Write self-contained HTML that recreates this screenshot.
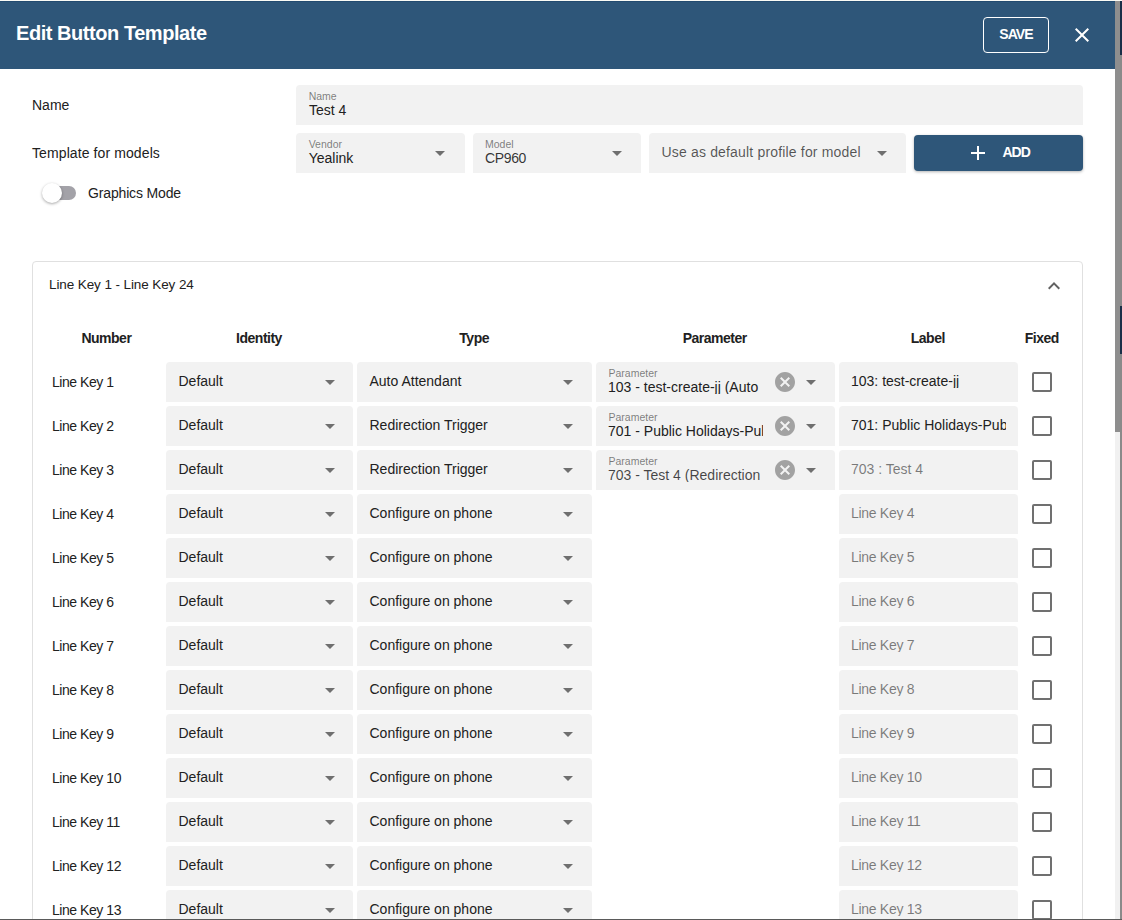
<!DOCTYPE html><html><head><meta charset="utf-8"><style>
html,body{margin:0;padding:0;width:1122px;height:920px;overflow:hidden;background:#fff;}
body{position:relative;font-family:"Liberation Sans",sans-serif;}
.t{position:absolute;white-space:nowrap;}
.b{position:absolute;}
</style></head><body>
<div class="b" style="left:0px;top:0px;width:1122px;height:1px;background:#fbfbf5;"></div>
<div class="b" style="left:0px;top:1px;width:1115px;height:68px;background:#2e5679;"></div>
<div class="b" style="left:0px;top:1px;width:1115px;height:1px;background:#234b70;"></div>
<div class="t" style="left:16px;top:23.07px;font-size:20px;line-height:20px;font-weight:700;color:#fff;letter-spacing:-0.45px;">Edit Button Template</div>
<div class="b" style="left:983px;top:17px;width:66px;height:36px;border:1px solid #fff;border-radius:4px;box-sizing:border-box;"></div>
<div class="t" style="left:716px;width:600px;text-align:center;top:26.85px;font-size:14px;line-height:14px;font-weight:700;color:#fff;letter-spacing:-0.9px;">SAVE</div>
<svg class="b" style="left:1070px;top:23px" width="24" height="24" viewBox="0 0 24 24"><path d="M19 6.41L17.59 5 12 10.59 6.41 5 5 6.41 10.59 12 5 17.59 6.41 19 12 13.41 17.59 19 19 17.59 13.41 12z" fill="#fff"/></svg>
<div class="t" style="left:32px;top:98.15px;font-size:14px;line-height:14px;font-weight:400;color:#212121;">Name</div>
<div class="t" style="left:32px;top:145.95px;font-size:14px;line-height:14px;font-weight:400;color:#212121;letter-spacing:0.1px;">Template for models</div>
<div class="b" style="left:296px;top:85px;width:787px;height:40px;background:#f2f2f2;border-radius:4px 4px 0 0;"></div>
<div class="t" style="left:308.7px;top:91.01px;font-size:10.5px;line-height:10.5px;font-weight:400;color:rgba(0,0,0,0.5);">Name</div>
<div class="t" style="left:309px;top:103.15px;font-size:14px;line-height:14px;font-weight:400;color:#212121;">Test 4</div>
<div class="b" style="left:296px;top:133px;width:169px;height:40px;background:#f2f2f2;border-radius:4px 4px 0 0;"></div>
<div class="t" style="left:308.7px;top:139.01px;font-size:10.5px;line-height:10.5px;font-weight:400;color:rgba(0,0,0,0.5);">Vendor</div>
<div class="t" style="left:308.7px;top:151.05px;font-size:14px;line-height:14px;font-weight:400;color:#212121;">Yealink</div>
<svg class="b" style="left:435.3px;top:151.3px" width="10" height="5" viewBox="0 0 10 5"><path d="M0 0L5 5L10 0Z" fill="rgba(0,0,0,0.54)"/></svg>
<div class="b" style="left:473px;top:133px;width:168px;height:40px;background:#f2f2f2;border-radius:4px 4px 0 0;"></div>
<div class="t" style="left:485px;top:139.01px;font-size:10.5px;line-height:10.5px;font-weight:400;color:rgba(0,0,0,0.5);">Model</div>
<div class="t" style="left:485px;top:151.05px;font-size:14px;line-height:14px;font-weight:400;color:rgba(0,0,0,0.8);letter-spacing:-0.35px;">CP960</div>
<svg class="b" style="left:611.8px;top:151.3px" width="10" height="5" viewBox="0 0 10 5"><path d="M0 0L5 5L10 0Z" fill="rgba(0,0,0,0.54)"/></svg>
<div class="b" style="left:649px;top:133px;width:257px;height:40px;background:#f2f2f2;border-radius:4px 4px 0 0;"></div>
<div class="t" style="left:661.5px;top:145.15px;font-size:14px;line-height:14px;font-weight:400;color:rgba(0,0,0,0.66);letter-spacing:0.17px;">Use as default profile for model</div>
<svg class="b" style="left:876.7px;top:151.3px" width="10" height="5" viewBox="0 0 10 5"><path d="M0 0L5 5L10 0Z" fill="rgba(0,0,0,0.54)"/></svg>
<div class="b" style="left:914px;top:135px;width:169px;height:36px;background:#2e5679;border-radius:4px;box-shadow:0 1px 3px rgba(0,0,0,0.3);"></div>
<svg class="b" style="left:966.3px;top:141px" width="24" height="24" viewBox="0 0 24 24"><path d="M19 13h-6v6h-2v-6H5v-2h6V5h2v6h6v2z" fill="#fff"/></svg>
<div class="t" style="left:1002.5px;top:145.35px;font-size:14px;line-height:14px;font-weight:700;color:#fff;letter-spacing:-1px;">ADD</div>
<div class="b" style="left:45px;top:186px;width:31px;height:14px;background:#a3a2a8;border-radius:7px;"></div>
<div class="b" style="left:42px;top:183px;width:20px;height:20px;background:#fff;border-radius:50%;box-shadow:0 1px 3px rgba(0,0,0,0.35);"></div>
<div class="t" style="left:88px;top:186.05px;font-size:14px;line-height:14px;font-weight:400;color:#212121;letter-spacing:-0.15px;">Graphics Mode</div>
<div class="b" style="left:32px;top:261px;width:1051px;height:699px;border:1px solid #e0e0e0;border-radius:4px;box-sizing:border-box;"></div>
<div class="t" style="left:49px;top:278.37px;font-size:13.5px;line-height:13.5px;font-weight:400;color:#212121;letter-spacing:-0.1px;">Line Key 1 - Line Key 24</div>
<svg class="b" style="left:1042px;top:274px" width="24" height="24" viewBox="0 0 24 24"><path d="M12 8l-6 6 1.41 1.41L12 10.83l4.59 4.58L18 14z" fill="rgba(0,0,0,0.62)"/></svg>
<div class="t" style="left:-193.6px;width:600px;text-align:center;top:330.95px;font-size:14px;line-height:14px;font-weight:700;color:#212121;letter-spacing:-0.5px;">Number</div>
<div class="t" style="left:-41.0px;width:600px;text-align:center;top:330.95px;font-size:14px;line-height:14px;font-weight:700;color:#212121;letter-spacing:-0.5px;">Identity</div>
<div class="t" style="left:174.2px;width:600px;text-align:center;top:330.95px;font-size:14px;line-height:14px;font-weight:700;color:#212121;letter-spacing:-0.5px;">Type</div>
<div class="t" style="left:414.69999999999993px;width:600px;text-align:center;top:330.95px;font-size:14px;line-height:14px;font-weight:700;color:#212121;letter-spacing:-0.5px;">Parameter</div>
<div class="t" style="left:627.8px;width:600px;text-align:center;top:330.95px;font-size:14px;line-height:14px;font-weight:700;color:#212121;letter-spacing:-0.5px;">Label</div>
<div class="t" style="left:741.8000000000002px;width:600px;text-align:center;top:330.95px;font-size:14px;line-height:14px;font-weight:700;color:#212121;letter-spacing:-0.5px;">Fixed</div>
<div class="t" style="left:52px;top:375.15px;font-size:14px;line-height:14px;font-weight:400;color:#212121;letter-spacing:-0.45px;">Line Key 1</div>
<div class="b" style="left:166px;top:362px;width:187px;height:40px;background:#f2f2f2;border-radius:4px 4px 0 0;"></div>
<div class="t" style="left:178.5px;top:374.15px;font-size:14px;line-height:14px;font-weight:400;color:#212121;">Default</div>
<svg class="b" style="left:324.5px;top:380.0px" width="10" height="5" viewBox="0 0 10 5"><path d="M0 0L5 5L10 0Z" fill="rgba(0,0,0,0.54)"/></svg>
<div class="b" style="left:357px;top:362px;width:235px;height:40px;background:#f2f2f2;border-radius:4px 4px 0 0;"></div>
<div class="t" style="left:369.5px;top:374.15px;font-size:14px;line-height:14px;font-weight:400;color:#212121;">Auto Attendant</div>
<svg class="b" style="left:562.5px;top:380.0px" width="10" height="5" viewBox="0 0 10 5"><path d="M0 0L5 5L10 0Z" fill="rgba(0,0,0,0.54)"/></svg>
<div class="b" style="left:596px;top:362px;width:239px;height:40px;background:#f2f2f2;border-radius:4px 4px 0 0;"></div>
<div class="t" style="left:608.5px;top:368.11px;font-size:10.5px;line-height:10.5px;font-weight:400;color:rgba(0,0,0,0.5);">Parameter</div>
<div class="t" style="left:608px;top:380.15px;width:154.5px;overflow:hidden;font-size:14px;line-height:14px;color:#212121">103 - test-create-jj (Auto</div>
<svg class="b" style="left:775px;top:372px" width="20" height="20" viewBox="2 2 20 20"><path d="M12 2C6.47 2 2 6.47 2 12s4.47 10 10 10 10-4.47 10-10S17.53 2 12 2zm5 13.59L15.59 17 12 13.41 8.41 17 7 15.59 10.59 12 7 8.41 8.41 7 12 10.59 15.59 7 17 8.41 13.41 12 17 15.59z" fill="#a2a2a2"/></svg>
<svg class="b" style="left:806px;top:380.0px" width="10" height="5" viewBox="0 0 10 5"><path d="M0 0L5 5L10 0Z" fill="rgba(0,0,0,0.54)"/></svg>
<div class="b" style="left:839px;top:362px;width:179px;height:40px;background:#f2f2f2;border-radius:4px 4px 0 0;"></div>
<div class="t" style="left:851px;top:374.15px;width:155px;overflow:hidden;font-size:14px;line-height:14px;color:#212121;letter-spacing:0px">103: test-create-jj</div>
<div class="b" style="left:1032px;top:372px;width:20px;height:20px;border:2px solid #707070;border-radius:2px;box-sizing:border-box;"></div>
<div class="t" style="left:52px;top:419.15px;font-size:14px;line-height:14px;font-weight:400;color:#212121;letter-spacing:-0.45px;">Line Key 2</div>
<div class="b" style="left:166px;top:406px;width:187px;height:40px;background:#f2f2f2;border-radius:4px 4px 0 0;"></div>
<div class="t" style="left:178.5px;top:418.15px;font-size:14px;line-height:14px;font-weight:400;color:#212121;">Default</div>
<svg class="b" style="left:324.5px;top:424.0px" width="10" height="5" viewBox="0 0 10 5"><path d="M0 0L5 5L10 0Z" fill="rgba(0,0,0,0.54)"/></svg>
<div class="b" style="left:357px;top:406px;width:235px;height:40px;background:#f2f2f2;border-radius:4px 4px 0 0;"></div>
<div class="t" style="left:369.5px;top:418.15px;font-size:14px;line-height:14px;font-weight:400;color:#212121;">Redirection Trigger</div>
<svg class="b" style="left:562.5px;top:424.0px" width="10" height="5" viewBox="0 0 10 5"><path d="M0 0L5 5L10 0Z" fill="rgba(0,0,0,0.54)"/></svg>
<div class="b" style="left:596px;top:406px;width:239px;height:40px;background:#f2f2f2;border-radius:4px 4px 0 0;"></div>
<div class="t" style="left:608.5px;top:412.11px;font-size:10.5px;line-height:10.5px;font-weight:400;color:rgba(0,0,0,0.5);">Parameter</div>
<div class="t" style="left:608px;top:424.15px;width:154.5px;overflow:hidden;font-size:14px;line-height:14px;color:#212121">701 - Public Holidays-Public</div>
<svg class="b" style="left:775px;top:416px" width="20" height="20" viewBox="2 2 20 20"><path d="M12 2C6.47 2 2 6.47 2 12s4.47 10 10 10 10-4.47 10-10S17.53 2 12 2zm5 13.59L15.59 17 12 13.41 8.41 17 7 15.59 10.59 12 7 8.41 8.41 7 12 10.59 15.59 7 17 8.41 13.41 12 17 15.59z" fill="#a2a2a2"/></svg>
<svg class="b" style="left:806px;top:424.0px" width="10" height="5" viewBox="0 0 10 5"><path d="M0 0L5 5L10 0Z" fill="rgba(0,0,0,0.54)"/></svg>
<div class="b" style="left:839px;top:406px;width:179px;height:40px;background:#f2f2f2;border-radius:4px 4px 0 0;"></div>
<div class="t" style="left:851px;top:418.15px;width:155px;overflow:hidden;font-size:14px;line-height:14px;color:#212121;letter-spacing:0px">701: Public Holidays-Public</div>
<div class="b" style="left:1032px;top:416px;width:20px;height:20px;border:2px solid #707070;border-radius:2px;box-sizing:border-box;"></div>
<div class="t" style="left:52px;top:463.15px;font-size:14px;line-height:14px;font-weight:400;color:#212121;letter-spacing:-0.45px;">Line Key 3</div>
<div class="b" style="left:166px;top:450px;width:187px;height:40px;background:#f2f2f2;border-radius:4px 4px 0 0;"></div>
<div class="t" style="left:178.5px;top:462.15px;font-size:14px;line-height:14px;font-weight:400;color:#212121;">Default</div>
<svg class="b" style="left:324.5px;top:468.0px" width="10" height="5" viewBox="0 0 10 5"><path d="M0 0L5 5L10 0Z" fill="rgba(0,0,0,0.54)"/></svg>
<div class="b" style="left:357px;top:450px;width:235px;height:40px;background:#f2f2f2;border-radius:4px 4px 0 0;"></div>
<div class="t" style="left:369.5px;top:462.15px;font-size:14px;line-height:14px;font-weight:400;color:#212121;">Redirection Trigger</div>
<svg class="b" style="left:562.5px;top:468.0px" width="10" height="5" viewBox="0 0 10 5"><path d="M0 0L5 5L10 0Z" fill="rgba(0,0,0,0.54)"/></svg>
<div class="b" style="left:596px;top:450px;width:239px;height:40px;background:#f2f2f2;border-radius:4px 4px 0 0;"></div>
<div class="t" style="left:608.5px;top:456.11px;font-size:10.5px;line-height:10.5px;font-weight:400;color:rgba(0,0,0,0.5);">Parameter</div>
<div class="t" style="left:608px;top:468.15px;width:154.5px;overflow:hidden;font-size:14px;line-height:14px;color:rgba(0,0,0,0.72)">703 - Test 4 (Redirection Trigger)</div>
<svg class="b" style="left:775px;top:460px" width="20" height="20" viewBox="2 2 20 20"><path d="M12 2C6.47 2 2 6.47 2 12s4.47 10 10 10 10-4.47 10-10S17.53 2 12 2zm5 13.59L15.59 17 12 13.41 8.41 17 7 15.59 10.59 12 7 8.41 8.41 7 12 10.59 15.59 7 17 8.41 13.41 12 17 15.59z" fill="#a2a2a2"/></svg>
<svg class="b" style="left:806px;top:468.0px" width="10" height="5" viewBox="0 0 10 5"><path d="M0 0L5 5L10 0Z" fill="rgba(0,0,0,0.54)"/></svg>
<div class="b" style="left:839px;top:450px;width:179px;height:40px;background:#f2f2f2;border-radius:4px 4px 0 0;"></div>
<div class="t" style="left:851px;top:462.15px;width:155px;overflow:hidden;font-size:14px;line-height:14px;color:rgba(0,0,0,0.5);letter-spacing:0px">703 : Test 4</div>
<div class="b" style="left:1032px;top:460px;width:20px;height:20px;border:2px solid #707070;border-radius:2px;box-sizing:border-box;"></div>
<div class="t" style="left:52px;top:507.15px;font-size:14px;line-height:14px;font-weight:400;color:#212121;letter-spacing:-0.45px;">Line Key 4</div>
<div class="b" style="left:166px;top:494px;width:187px;height:40px;background:#f2f2f2;border-radius:4px 4px 0 0;"></div>
<div class="t" style="left:178.5px;top:506.15px;font-size:14px;line-height:14px;font-weight:400;color:#212121;">Default</div>
<svg class="b" style="left:324.5px;top:512.0px" width="10" height="5" viewBox="0 0 10 5"><path d="M0 0L5 5L10 0Z" fill="rgba(0,0,0,0.54)"/></svg>
<div class="b" style="left:357px;top:494px;width:235px;height:40px;background:#f2f2f2;border-radius:4px 4px 0 0;"></div>
<div class="t" style="left:369.5px;top:506.15px;font-size:14px;line-height:14px;font-weight:400;color:#212121;">Configure on phone</div>
<svg class="b" style="left:562.5px;top:512.0px" width="10" height="5" viewBox="0 0 10 5"><path d="M0 0L5 5L10 0Z" fill="rgba(0,0,0,0.54)"/></svg>
<div class="b" style="left:839px;top:494px;width:179px;height:40px;background:#f2f2f2;border-radius:4px 4px 0 0;"></div>
<div class="t" style="left:851px;top:506.15px;width:155px;overflow:hidden;font-size:14px;line-height:14px;color:rgba(0,0,0,0.5);letter-spacing:-0.3px">Line Key 4</div>
<div class="b" style="left:1032px;top:504px;width:20px;height:20px;border:2px solid #707070;border-radius:2px;box-sizing:border-box;"></div>
<div class="t" style="left:52px;top:551.15px;font-size:14px;line-height:14px;font-weight:400;color:#212121;letter-spacing:-0.45px;">Line Key 5</div>
<div class="b" style="left:166px;top:538px;width:187px;height:40px;background:#f2f2f2;border-radius:4px 4px 0 0;"></div>
<div class="t" style="left:178.5px;top:550.15px;font-size:14px;line-height:14px;font-weight:400;color:#212121;">Default</div>
<svg class="b" style="left:324.5px;top:556.0px" width="10" height="5" viewBox="0 0 10 5"><path d="M0 0L5 5L10 0Z" fill="rgba(0,0,0,0.54)"/></svg>
<div class="b" style="left:357px;top:538px;width:235px;height:40px;background:#f2f2f2;border-radius:4px 4px 0 0;"></div>
<div class="t" style="left:369.5px;top:550.15px;font-size:14px;line-height:14px;font-weight:400;color:#212121;">Configure on phone</div>
<svg class="b" style="left:562.5px;top:556.0px" width="10" height="5" viewBox="0 0 10 5"><path d="M0 0L5 5L10 0Z" fill="rgba(0,0,0,0.54)"/></svg>
<div class="b" style="left:839px;top:538px;width:179px;height:40px;background:#f2f2f2;border-radius:4px 4px 0 0;"></div>
<div class="t" style="left:851px;top:550.15px;width:155px;overflow:hidden;font-size:14px;line-height:14px;color:rgba(0,0,0,0.5);letter-spacing:-0.3px">Line Key 5</div>
<div class="b" style="left:1032px;top:548px;width:20px;height:20px;border:2px solid #707070;border-radius:2px;box-sizing:border-box;"></div>
<div class="t" style="left:52px;top:595.15px;font-size:14px;line-height:14px;font-weight:400;color:#212121;letter-spacing:-0.45px;">Line Key 6</div>
<div class="b" style="left:166px;top:582px;width:187px;height:40px;background:#f2f2f2;border-radius:4px 4px 0 0;"></div>
<div class="t" style="left:178.5px;top:594.15px;font-size:14px;line-height:14px;font-weight:400;color:#212121;">Default</div>
<svg class="b" style="left:324.5px;top:600.0px" width="10" height="5" viewBox="0 0 10 5"><path d="M0 0L5 5L10 0Z" fill="rgba(0,0,0,0.54)"/></svg>
<div class="b" style="left:357px;top:582px;width:235px;height:40px;background:#f2f2f2;border-radius:4px 4px 0 0;"></div>
<div class="t" style="left:369.5px;top:594.15px;font-size:14px;line-height:14px;font-weight:400;color:#212121;">Configure on phone</div>
<svg class="b" style="left:562.5px;top:600.0px" width="10" height="5" viewBox="0 0 10 5"><path d="M0 0L5 5L10 0Z" fill="rgba(0,0,0,0.54)"/></svg>
<div class="b" style="left:839px;top:582px;width:179px;height:40px;background:#f2f2f2;border-radius:4px 4px 0 0;"></div>
<div class="t" style="left:851px;top:594.15px;width:155px;overflow:hidden;font-size:14px;line-height:14px;color:rgba(0,0,0,0.5);letter-spacing:-0.3px">Line Key 6</div>
<div class="b" style="left:1032px;top:592px;width:20px;height:20px;border:2px solid #707070;border-radius:2px;box-sizing:border-box;"></div>
<div class="t" style="left:52px;top:639.15px;font-size:14px;line-height:14px;font-weight:400;color:#212121;letter-spacing:-0.45px;">Line Key 7</div>
<div class="b" style="left:166px;top:626px;width:187px;height:40px;background:#f2f2f2;border-radius:4px 4px 0 0;"></div>
<div class="t" style="left:178.5px;top:638.15px;font-size:14px;line-height:14px;font-weight:400;color:#212121;">Default</div>
<svg class="b" style="left:324.5px;top:644.0px" width="10" height="5" viewBox="0 0 10 5"><path d="M0 0L5 5L10 0Z" fill="rgba(0,0,0,0.54)"/></svg>
<div class="b" style="left:357px;top:626px;width:235px;height:40px;background:#f2f2f2;border-radius:4px 4px 0 0;"></div>
<div class="t" style="left:369.5px;top:638.15px;font-size:14px;line-height:14px;font-weight:400;color:#212121;">Configure on phone</div>
<svg class="b" style="left:562.5px;top:644.0px" width="10" height="5" viewBox="0 0 10 5"><path d="M0 0L5 5L10 0Z" fill="rgba(0,0,0,0.54)"/></svg>
<div class="b" style="left:839px;top:626px;width:179px;height:40px;background:#f2f2f2;border-radius:4px 4px 0 0;"></div>
<div class="t" style="left:851px;top:638.15px;width:155px;overflow:hidden;font-size:14px;line-height:14px;color:rgba(0,0,0,0.5);letter-spacing:-0.3px">Line Key 7</div>
<div class="b" style="left:1032px;top:636px;width:20px;height:20px;border:2px solid #707070;border-radius:2px;box-sizing:border-box;"></div>
<div class="t" style="left:52px;top:683.15px;font-size:14px;line-height:14px;font-weight:400;color:#212121;letter-spacing:-0.45px;">Line Key 8</div>
<div class="b" style="left:166px;top:670px;width:187px;height:40px;background:#f2f2f2;border-radius:4px 4px 0 0;"></div>
<div class="t" style="left:178.5px;top:682.15px;font-size:14px;line-height:14px;font-weight:400;color:#212121;">Default</div>
<svg class="b" style="left:324.5px;top:688.0px" width="10" height="5" viewBox="0 0 10 5"><path d="M0 0L5 5L10 0Z" fill="rgba(0,0,0,0.54)"/></svg>
<div class="b" style="left:357px;top:670px;width:235px;height:40px;background:#f2f2f2;border-radius:4px 4px 0 0;"></div>
<div class="t" style="left:369.5px;top:682.15px;font-size:14px;line-height:14px;font-weight:400;color:#212121;">Configure on phone</div>
<svg class="b" style="left:562.5px;top:688.0px" width="10" height="5" viewBox="0 0 10 5"><path d="M0 0L5 5L10 0Z" fill="rgba(0,0,0,0.54)"/></svg>
<div class="b" style="left:839px;top:670px;width:179px;height:40px;background:#f2f2f2;border-radius:4px 4px 0 0;"></div>
<div class="t" style="left:851px;top:682.15px;width:155px;overflow:hidden;font-size:14px;line-height:14px;color:rgba(0,0,0,0.5);letter-spacing:-0.3px">Line Key 8</div>
<div class="b" style="left:1032px;top:680px;width:20px;height:20px;border:2px solid #707070;border-radius:2px;box-sizing:border-box;"></div>
<div class="t" style="left:52px;top:727.15px;font-size:14px;line-height:14px;font-weight:400;color:#212121;letter-spacing:-0.45px;">Line Key 9</div>
<div class="b" style="left:166px;top:714px;width:187px;height:40px;background:#f2f2f2;border-radius:4px 4px 0 0;"></div>
<div class="t" style="left:178.5px;top:726.15px;font-size:14px;line-height:14px;font-weight:400;color:#212121;">Default</div>
<svg class="b" style="left:324.5px;top:732.0px" width="10" height="5" viewBox="0 0 10 5"><path d="M0 0L5 5L10 0Z" fill="rgba(0,0,0,0.54)"/></svg>
<div class="b" style="left:357px;top:714px;width:235px;height:40px;background:#f2f2f2;border-radius:4px 4px 0 0;"></div>
<div class="t" style="left:369.5px;top:726.15px;font-size:14px;line-height:14px;font-weight:400;color:#212121;">Configure on phone</div>
<svg class="b" style="left:562.5px;top:732.0px" width="10" height="5" viewBox="0 0 10 5"><path d="M0 0L5 5L10 0Z" fill="rgba(0,0,0,0.54)"/></svg>
<div class="b" style="left:839px;top:714px;width:179px;height:40px;background:#f2f2f2;border-radius:4px 4px 0 0;"></div>
<div class="t" style="left:851px;top:726.15px;width:155px;overflow:hidden;font-size:14px;line-height:14px;color:rgba(0,0,0,0.5);letter-spacing:-0.3px">Line Key 9</div>
<div class="b" style="left:1032px;top:724px;width:20px;height:20px;border:2px solid #707070;border-radius:2px;box-sizing:border-box;"></div>
<div class="t" style="left:52px;top:771.15px;font-size:14px;line-height:14px;font-weight:400;color:#212121;letter-spacing:-0.45px;">Line Key 10</div>
<div class="b" style="left:166px;top:758px;width:187px;height:40px;background:#f2f2f2;border-radius:4px 4px 0 0;"></div>
<div class="t" style="left:178.5px;top:770.15px;font-size:14px;line-height:14px;font-weight:400;color:#212121;">Default</div>
<svg class="b" style="left:324.5px;top:776.0px" width="10" height="5" viewBox="0 0 10 5"><path d="M0 0L5 5L10 0Z" fill="rgba(0,0,0,0.54)"/></svg>
<div class="b" style="left:357px;top:758px;width:235px;height:40px;background:#f2f2f2;border-radius:4px 4px 0 0;"></div>
<div class="t" style="left:369.5px;top:770.15px;font-size:14px;line-height:14px;font-weight:400;color:#212121;">Configure on phone</div>
<svg class="b" style="left:562.5px;top:776.0px" width="10" height="5" viewBox="0 0 10 5"><path d="M0 0L5 5L10 0Z" fill="rgba(0,0,0,0.54)"/></svg>
<div class="b" style="left:839px;top:758px;width:179px;height:40px;background:#f2f2f2;border-radius:4px 4px 0 0;"></div>
<div class="t" style="left:851px;top:770.15px;width:155px;overflow:hidden;font-size:14px;line-height:14px;color:rgba(0,0,0,0.5);letter-spacing:-0.3px">Line Key 10</div>
<div class="b" style="left:1032px;top:768px;width:20px;height:20px;border:2px solid #707070;border-radius:2px;box-sizing:border-box;"></div>
<div class="t" style="left:52px;top:815.15px;font-size:14px;line-height:14px;font-weight:400;color:#212121;letter-spacing:-0.45px;">Line Key 11</div>
<div class="b" style="left:166px;top:802px;width:187px;height:40px;background:#f2f2f2;border-radius:4px 4px 0 0;"></div>
<div class="t" style="left:178.5px;top:814.15px;font-size:14px;line-height:14px;font-weight:400;color:#212121;">Default</div>
<svg class="b" style="left:324.5px;top:820.0px" width="10" height="5" viewBox="0 0 10 5"><path d="M0 0L5 5L10 0Z" fill="rgba(0,0,0,0.54)"/></svg>
<div class="b" style="left:357px;top:802px;width:235px;height:40px;background:#f2f2f2;border-radius:4px 4px 0 0;"></div>
<div class="t" style="left:369.5px;top:814.15px;font-size:14px;line-height:14px;font-weight:400;color:#212121;">Configure on phone</div>
<svg class="b" style="left:562.5px;top:820.0px" width="10" height="5" viewBox="0 0 10 5"><path d="M0 0L5 5L10 0Z" fill="rgba(0,0,0,0.54)"/></svg>
<div class="b" style="left:839px;top:802px;width:179px;height:40px;background:#f2f2f2;border-radius:4px 4px 0 0;"></div>
<div class="t" style="left:851px;top:814.15px;width:155px;overflow:hidden;font-size:14px;line-height:14px;color:rgba(0,0,0,0.5);letter-spacing:-0.3px">Line Key 11</div>
<div class="b" style="left:1032px;top:812px;width:20px;height:20px;border:2px solid #707070;border-radius:2px;box-sizing:border-box;"></div>
<div class="t" style="left:52px;top:859.15px;font-size:14px;line-height:14px;font-weight:400;color:#212121;letter-spacing:-0.45px;">Line Key 12</div>
<div class="b" style="left:166px;top:846px;width:187px;height:40px;background:#f2f2f2;border-radius:4px 4px 0 0;"></div>
<div class="t" style="left:178.5px;top:858.15px;font-size:14px;line-height:14px;font-weight:400;color:#212121;">Default</div>
<svg class="b" style="left:324.5px;top:864.0px" width="10" height="5" viewBox="0 0 10 5"><path d="M0 0L5 5L10 0Z" fill="rgba(0,0,0,0.54)"/></svg>
<div class="b" style="left:357px;top:846px;width:235px;height:40px;background:#f2f2f2;border-radius:4px 4px 0 0;"></div>
<div class="t" style="left:369.5px;top:858.15px;font-size:14px;line-height:14px;font-weight:400;color:#212121;">Configure on phone</div>
<svg class="b" style="left:562.5px;top:864.0px" width="10" height="5" viewBox="0 0 10 5"><path d="M0 0L5 5L10 0Z" fill="rgba(0,0,0,0.54)"/></svg>
<div class="b" style="left:839px;top:846px;width:179px;height:40px;background:#f2f2f2;border-radius:4px 4px 0 0;"></div>
<div class="t" style="left:851px;top:858.15px;width:155px;overflow:hidden;font-size:14px;line-height:14px;color:rgba(0,0,0,0.5);letter-spacing:-0.3px">Line Key 12</div>
<div class="b" style="left:1032px;top:856px;width:20px;height:20px;border:2px solid #707070;border-radius:2px;box-sizing:border-box;"></div>
<div class="t" style="left:52px;top:903.15px;font-size:14px;line-height:14px;font-weight:400;color:#212121;letter-spacing:-0.45px;">Line Key 13</div>
<div class="b" style="left:166px;top:890px;width:187px;height:40px;background:#f2f2f2;border-radius:4px 4px 0 0;"></div>
<div class="t" style="left:178.5px;top:902.15px;font-size:14px;line-height:14px;font-weight:400;color:#212121;">Default</div>
<svg class="b" style="left:324.5px;top:908.0px" width="10" height="5" viewBox="0 0 10 5"><path d="M0 0L5 5L10 0Z" fill="rgba(0,0,0,0.54)"/></svg>
<div class="b" style="left:357px;top:890px;width:235px;height:40px;background:#f2f2f2;border-radius:4px 4px 0 0;"></div>
<div class="t" style="left:369.5px;top:902.15px;font-size:14px;line-height:14px;font-weight:400;color:#212121;">Configure on phone</div>
<svg class="b" style="left:562.5px;top:908.0px" width="10" height="5" viewBox="0 0 10 5"><path d="M0 0L5 5L10 0Z" fill="rgba(0,0,0,0.54)"/></svg>
<div class="b" style="left:839px;top:890px;width:179px;height:40px;background:#f2f2f2;border-radius:4px 4px 0 0;"></div>
<div class="t" style="left:851px;top:902.15px;width:155px;overflow:hidden;font-size:14px;line-height:14px;color:rgba(0,0,0,0.5);letter-spacing:-0.3px">Line Key 13</div>
<div class="b" style="left:1032px;top:900px;width:20px;height:20px;border:2px solid #707070;border-radius:2px;box-sizing:border-box;"></div>
<div class="b" style="left:0px;top:919px;width:1122px;height:1px;background:#5a5a5a;"></div>
<div class="b" style="left:1115px;top:1px;width:5px;height:431px;background:#8e8e8e;"></div>
<div class="b" style="left:1115px;top:432px;width:5px;height:487px;background:#f1f1f1;"></div>
<div class="b" style="left:1120px;top:1px;width:2px;height:918px;background:#8a8a8a;"></div>
<div class="b" style="left:1120px;top:1px;width:2px;height:54px;background:#1a2f48;"></div>
<div class="b" style="left:1120px;top:306px;width:2px;height:48px;background:#1a2f48;"></div>
</body></html>
